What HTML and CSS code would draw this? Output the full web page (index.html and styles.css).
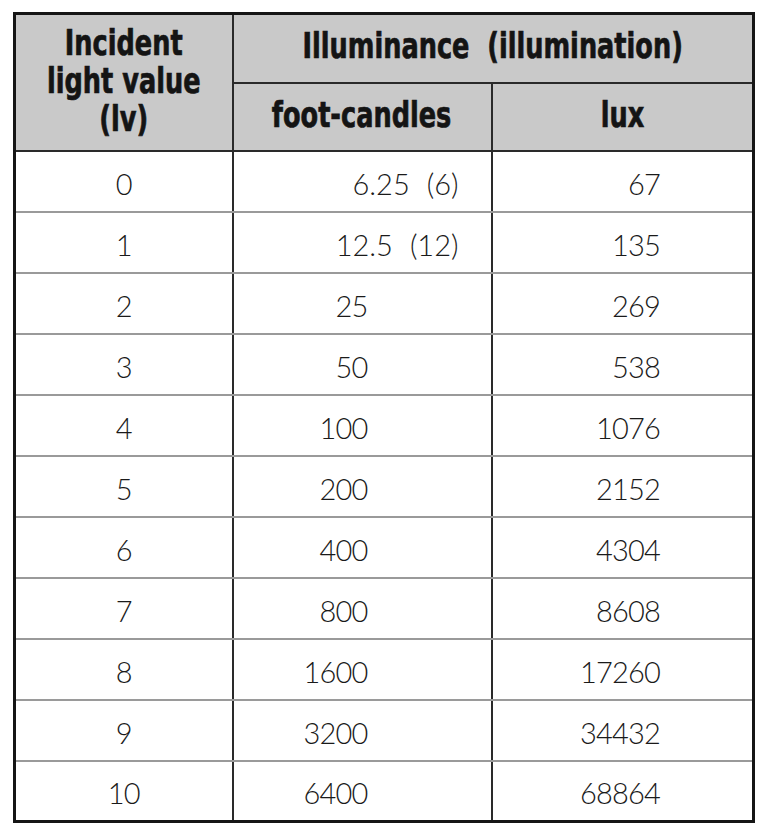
FILE: index.html
```html
<!DOCTYPE html>
<html lang="en">
<head>
<meta charset="utf-8">
<title>Incident light value table</title>
<link rel="stylesheet" href="styles.css">
</head>
<body>
<div class="page">
  <table class="lv-table">
    <colgroup>
      <col class="c1">
      <col class="c2">
      <col class="c3">
    </colgroup>
    <thead>
      <tr class="h1">
        <th rowspan="2" class="lv-head">
          <span class="ht">Incident</span>
          <span class="ht">light value</span>
          <span class="ht">(lv)</span>
        </th>
        <th colspan="2"><span class="ht">Illuminance &nbsp;(illumination)</span></th>
      </tr>
      <tr class="h2">
        <th class="sub"><span class="ht">foot-candles</span></th>
        <th class="sub"><span class="ht">lux</span></th>
      </tr>
    </thead>
    <tbody>
      <tr><td>0</td><td class="fc dec">6.25<span class="paren">(6)</span></td><td class="lux">67</td></tr>
      <tr><td>1</td><td class="fc dec">12.5<span class="paren">(12)</span></td><td class="lux">135</td></tr>
      <tr><td>2</td><td class="fc">25</td><td class="lux">269</td></tr>
      <tr><td>3</td><td class="fc">50</td><td class="lux">538</td></tr>
      <tr><td>4</td><td class="fc">100</td><td class="lux">1076</td></tr>
      <tr><td>5</td><td class="fc">200</td><td class="lux">2152</td></tr>
      <tr><td>6</td><td class="fc">400</td><td class="lux">4304</td></tr>
      <tr><td>7</td><td class="fc">800</td><td class="lux">8608</td></tr>
      <tr><td>8</td><td class="fc">1600</td><td class="lux">17260</td></tr>
      <tr><td>9</td><td class="fc">3200</td><td class="lux">34432</td></tr>
      <tr class="last"><td>10</td><td class="fc">6400</td><td class="lux">68864</td></tr>
    </tbody>
  </table>
</div>
</body>
</html>
```

FILE: styles.css
```css
html, body {
  margin: 0;
  padding: 0;
  background: #ffffff;
}

.page {
  padding: 12px 0 0 13px;
}

.lv-table {
  border-collapse: collapse;
  width: 742px;
  table-layout: fixed;
  border: 3px solid #151515;
  font-family: Lato, "Liberation Sans", sans-serif;
  font-weight: 300;
  color: #1a1a1a;
}

.c1 { width: 218px; }
.c2 { width: 259px; }
.c3 { width: 262px; }

.lv-table th {
  background: #c9c9c9;
  color: #141414;
  font-family: "DejaVu Sans Condensed", "DejaVu Sans", sans-serif;
  font-stretch: condensed;
  font-weight: bold;
  font-size: 36px;
  line-height: 38px;
  text-align: center;
  vertical-align: middle;
  padding: 0 0 5px 0;
  border: 2px solid #2a2a2a;
  -webkit-text-stroke: 0.7px #141414;
}

.lv-table tr.h1 th {
  height: 62px;
}

.lv-table tr.h2 th {
  height: 61px;
}

.lv-table th.lv-head {
  padding: 0 0 3px 0;
}

.lv-head .ht {
  display: block;
}

.ht {
  display: inline-block;
  transform: scaleX(0.79);
  white-space: nowrap;
}

.lv-table td {
  height: 61px;
  padding: 5px 0 0 0;
  box-sizing: border-box;
  font-size: 29px;
  line-height: 30px;
  letter-spacing: -0.8px;
  text-align: center;
  vertical-align: middle;
  border-top: 2px solid #9a9a9a;
  border-bottom: 2px solid #9a9a9a;
  border-left: 2px solid #2a2a2a;
  border-right: 2px solid #2a2a2a;
}

.lv-table td.fc {
  text-align: right;
  padding-right: 123px;
}

.lv-table td.fc.dec {
  padding-right: 32px;
  letter-spacing: 0;
}

.paren {
  margin-left: 17px;
}

.lv-table td.lux {
  text-align: right;
  padding-right: 92px;
}

.lv-table tr.last td {
  height: 60px;
  border-bottom: 3px solid #151515;
}
```
